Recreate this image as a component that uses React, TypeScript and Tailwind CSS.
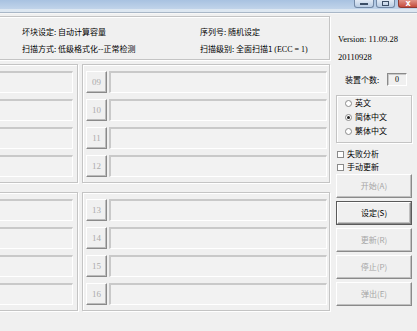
import React from "react";

const cjk = "font-['Noto_Sans_CJK_SC','Noto_Sans',sans-serif]";
const serif = "font-['Liberation_Serif','Noto_Sans_CJK_SC',serif]";

function Field() {
  return (
    <div className="flex-1 h-[22px] border-t-2 border-l-2 border-r border-b border-t-[#c9c9c9] border-l-[#c9c9c9] border-r-white border-b-white bg-[#f2f2f2]" />
  );
}

function NumRow({ n }: { n: string }) {
  return (
    <div className="flex h-[22px] gap-[2px]">
      <div
        className={`w-[21px] h-[22px] flex items-center justify-center border border-t-white border-l-white border-r-[#8a8a8a] border-b-[#8a8a8a] shadow-[inset_-1px_-1px_0_#bcbcbc] text-[9px] leading-none text-[#ababab] ${serif}`}
      >
        {n}
      </div>
      <Field />
    </div>
  );
}

function Group({
  children,
  className,
}: {
  children: React.ReactNode;
  className: string;
}) {
  return (
    <div
      className={`border border-[#c4c4c4] shadow-[inset_1px_1px_0_#ffffff,1px_1px_0_#ffffff] ${className}`}
    >
      {children}
    </div>
  );
}

function Block({ nums, top }: { nums: string[]; top: string }) {
  return (
    <div className={`flex gap-[4px] ${top}`}>
      <Group className="w-[88px] pl-[3px] pr-[4px] pt-[6px] pb-[5px]">
        <div className="flex flex-col gap-[6px]">
          {nums.map((n) => (
            <div key={n} className="flex">
              <Field />
            </div>
          ))}
        </div>
      </Group>
      <Group className="w-[248px] pl-[3px] pr-[2px] pt-[6px] pb-[5px]">
        <div className="flex flex-col gap-[6px]">
          {nums.map((n) => (
            <NumRow key={n} n={n} />
          ))}
        </div>
      </Group>
    </div>
  );
}

function Radio({ label, checked }: { label: string; checked?: boolean }) {
  return (
    <div className="flex items-center h-[12px] gap-[3px]">
      <div className="w-[7px] h-[7px] rounded-full border border-[#8a8a8a] bg-white flex items-center justify-center">
        {checked && <div className="w-[3px] h-[3px] rounded-full bg-[#222]" />}
      </div>
      <span className="text-[8px] leading-none text-black">{label}</span>
    </div>
  );
}

function Check({ label }: { label: string }) {
  return (
    <div className="flex items-center h-[12px] gap-[3px]">
      <div className="w-[7px] h-[7px] border border-[#8a8a8a] bg-white" />
      <span className="text-[8px] leading-none text-black">{label}</span>
    </div>
  );
}

function Btn({
  label,
  enabled,
  def,
}: {
  label: string;
  enabled?: boolean;
  def?: boolean;
}) {
  return (
    <div
      className={`h-[24px] w-[76px] ${def ? "border border-[#5a5a5a]" : ""}`}
    >
      <div
        className={`h-full w-full flex items-center justify-center border border-t-white border-l-white border-r-[#8a8a8a] border-b-[#8a8a8a] shadow-[inset_-1px_-1px_0_#c0c0c0] bg-[#f0f0f0] text-[8px] leading-none ${
          enabled ? "text-black" : "text-[#a6a6a6]"
        }`}
      >
        {label}
      </div>
    </div>
  );
}

export default function App() {
  return (
    <div
      className={`w-[417px] h-[331px] overflow-hidden bg-[#f0f0f0] flex flex-col ${cjk}`}
    >
      {/* title bar */}
      <div className="h-[9px] bg-gradient-to-b from-[#a8c2e1] to-[#c1d4ea] flex justify-end">
        <div className="w-[20px] h-[8px] rounded-b-[3px] border border-t-0 border-[#7389a6] bg-gradient-to-b from-[#e2eaf5] to-[#b9cce3] flex items-center justify-center">
          <div className="w-[8px] h-[2px] bg-[#3c4e66] mt-[1px]" />
        </div>
        <div className="w-[19px] h-[8px] ml-[2px] rounded-b-[3px] border border-t-0 border-[#7389a6] bg-gradient-to-b from-[#e2eaf5] to-[#b9cce3] flex items-center justify-center">
          <div className="w-[7px] h-[5px] border border-[#3c4e66]" />
        </div>
        <div className="w-[19px] h-[8px] ml-[3px] rounded-bl-[3px] border border-t-0 border-r-0 border-[#8d3a33] bg-gradient-to-b from-[#e09288] to-[#c44a3d] flex items-center justify-center text-white text-[8px] leading-none font-bold font-['DejaVu_Sans',sans-serif]">
          x
        </div>
      </div>
      <div className="h-[3px] bg-[#dde7f1]" />
      <div className="h-[1px] bg-[#a9b7c7]" />
      <div className="h-[1px] bg-[#f7f7f7]" />

      {/* client */}
      <div className="flex flex-1">
        {/* main column */}
        <div className="w-[340px] -ml-[10px] shrink-0 flex flex-col">
          <Group className="mt-[2px] h-[44px] pl-[31px] pt-[9px]">
            <div className="grid grid-cols-[178px_1fr] gap-y-[5px] text-[8px] leading-[12px] text-black">
              <div>坏块设定: 自动计算容量</div>
              <div>序列号: 随机设定</div>
              <div>扫描方式: 低级格式化--正常检测</div>
              <div>
                扫描级别: 全面扫描1{" "}
                <span className={serif}>(ECC = 1)</span>
              </div>
            </div>
          </Group>
          <Block nums={["09", "10", "11", "12"]} top="mt-[4px]" />
          <Block nums={["13", "14", "15", "16"]} top="mt-[9px]" />
        </div>

        {/* right panel */}
        <div className="flex-1 flex flex-col pl-[6px]">
          <div
            className={`pl-[2px] mt-[19px] text-[8.5px] leading-[12px] text-black ${serif}`}
          >
            Version: 11.09.28
          </div>
          <div
            className={`pl-[2px] mt-[6px] text-[8.5px] leading-[12px] text-black ${serif}`}
          >
            20110928
          </div>
          <div className="mt-[10px] h-[13px] flex items-center pl-[9px]">
            <span className="text-[8px] leading-none text-black w-[42px]">
              装置个数:
            </span>
            <div
              className={`w-[20px] h-[13px] border-t border-l border-r border-b border-t-[#8a8a8a] border-l-[#8a8a8a] border-r-white border-b-white shadow-[inset_1px_1px_0_#c8c8c8] flex items-center justify-center text-[8px] leading-none ${serif}`}
            >
              0
            </div>
          </div>
          <Group className="mt-[9px] w-[76px] h-[48px] pl-[8px] pt-[1px] flex flex-col gap-[2px]">
            <Radio label="英文" />
            <Radio label="简体中文" checked />
            <Radio label="繁体中文" />
          </Group>
          <div className="mt-[5px] flex flex-col gap-[1px] pl-[1px]">
            <Check label="失败分析" />
            <Check label="手动更新" />
          </div>
          <div className="mt-[1px] flex flex-col gap-[3px]">
            <Btn label="开始(A)" />
            <Btn label="设定(S)" enabled def />
            <Btn label="更新(R)" />
            <Btn label="停止(P)" />
            <Btn label="弹出(E)" />
          </div>
        </div>
      </div>
    </div>
  );
}
